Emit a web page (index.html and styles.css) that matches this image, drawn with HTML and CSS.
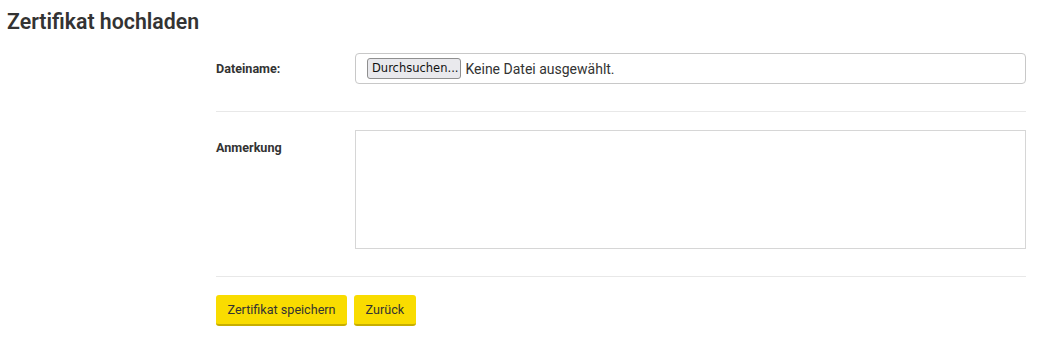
FILE: index.html
```html
<!DOCTYPE html>
<html lang="de">
<head>
    <meta charset="UTF-8">
    <meta name="viewport" content="width=device-width, initial-scale=1.0">
    <title>Zertifikat hochladen</title>
    <link rel="stylesheet" href="styles.css">
</head>
<body>
    <div class="page">
        <h2 class="page-title">Zertifikat hochladen</h2>

        <form class="upload-form">
            <div class="form-row row-file">
                <label class="form-label" for="datei">Dateiname:</label>
                <div class="file-field">
                    <span class="file-button">Durchsuchen...</span>
                    <span class="file-name">Keine Datei ausgewählt.</span>
                </div>
            </div>

            <div class="form-row row-note">
                <label class="form-label" for="anmerkung">Anmerkung</label>
                <textarea class="note-field" id="anmerkung"></textarea>
            </div>

            <div class="form-actions">
                <button type="button" class="btn">Zertifikat speichern</button>
                <button type="button" class="btn">Zurück</button>
            </div>
        </form>
    </div>
</body>
</html>
```

FILE: styles.css
```css
body {
    margin: 0;
    font-family: 'Roboto', 'Liberation Sans', sans-serif;
    color: #333;
    background-color: #fff;
}

.page {
    padding: 8px 7px 0;
}

.page-title {
    margin: 0;
    font-size: 21.3px;
    font-weight: 600;
    line-height: 28px;
    color: #333;
}

.upload-form {
    margin: 17px 0 0 209px;
    width: 810px;
}

.form-row {
    display: flex;
    border-bottom: 1px solid #e8e8e8;
}

.row-file {
    align-items: center;
    padding-bottom: 27px;
}

.row-note {
    align-items: flex-start;
    padding: 18px 0 27px;
}

.form-label {
    width: 139px;
    flex-shrink: 0;
    font-size: 12.6px;
    font-weight: 700;
    color: #333;
}

.row-note .form-label {
    padding-top: 10px;
}

.file-field {
    flex: 1;
    height: 29px;
    border: 1px solid #c8c8c8;
    border-radius: 4px;
    display: flex;
    align-items: center;
    padding-left: 11px;
}

.file-button {
    display: inline-block;
    height: 19px;
    line-height: 19px;
    padding: 0 2px 0 4px;
    border: 1px solid #8f8f8f;
    border-radius: 3px;
    background-color: #e9e9ed;
    color: #111;
    font-family: 'DejaVu Sans', sans-serif;
    font-size: 11.5px;
}

.file-name {
    margin-left: 4px;
    font-size: 14px;
    font-weight: 400;
    color: #333;
}

.note-field {
    flex: 1;
    box-sizing: border-box;
    height: 119px;
    margin: 0;
    padding: 2px;
    border: 1px solid #d6d6d6;
    resize: none;
    font-family: inherit;
}

.form-actions {
    display: flex;
    gap: 7px;
    padding-top: 18px;
}

.btn {
    height: 31px;
    padding: 0 11.5px;
    border: none;
    border-bottom: 2px solid #c7ae00;
    border-radius: 3px;
    background-color: #f9dc00;
    color: #333;
    font-family: inherit;
    font-size: 12.6px;
    cursor: pointer;
}
```
